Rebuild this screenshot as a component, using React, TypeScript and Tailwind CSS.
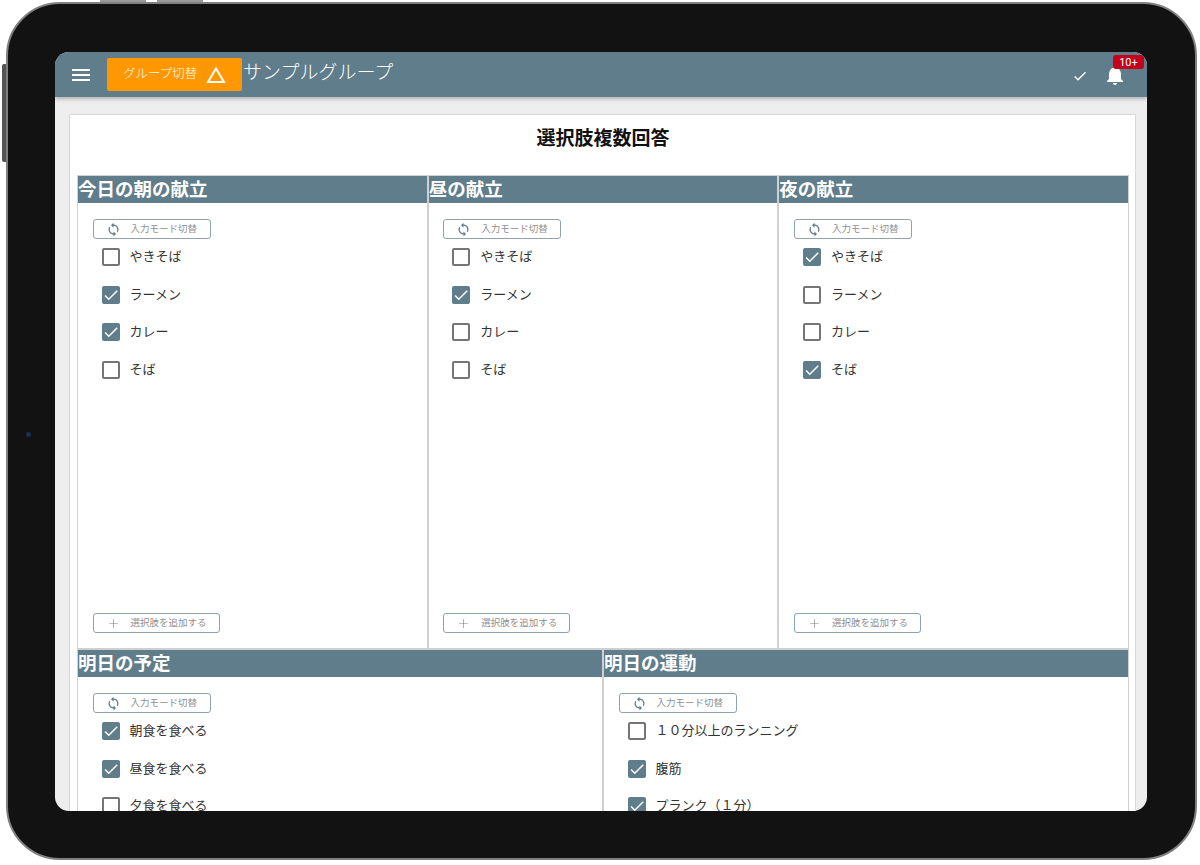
const FONT = "font-['Roboto','Noto_Sans_CJK_JP',sans-serif]";

type Choice = { label: string; checked?: boolean };
type Question = { title: string; choices: Choice[]; canAdd?: boolean };

const meals = (on: boolean[]): Choice[] =>
  ["やきそば", "ラーメン", "カレー", "そば"].map((label, i) => ({ label, checked: on[i] }));

const topRow: Question[] = [
  { title: "今日の朝の献立", choices: meals([false, true, true, false]), canAdd: true },
  { title: "昼の献立", choices: meals([false, true, false, false]), canAdd: true },
  { title: "夜の献立", choices: meals([true, false, false, true]), canAdd: true },
];

const bottomRow: Question[] = [
  {
    title: "明日の予定",
    choices: [
      { label: "朝食を食べる", checked: true },
      { label: "昼食を食べる", checked: true },
      { label: "夕食を食べる" },
    ],
  },
  {
    title: "明日の運動",
    choices: [
      { label: "１０分以上のランニング" },
      { label: "腹筋", checked: true },
      { label: "プランク（１分）", checked: true },
    ],
  },
];

function Checkbox({ checked }: { checked?: boolean }) {
  if (checked) {
    return (
      <span className="flex h-[18px] w-[18px] shrink-0 items-center justify-center rounded-[2px] bg-[#607d8b]">
        <svg viewBox="0 0 24 24" className="h-[18px] w-[18px] fill-white">
          <path d="M9 16.2 4.8 12l-1.4 1.4L9 19 21 7l-1.4-1.4L9 16.2z" />
        </svg>
      </span>
    );
  }
  return <span className="h-[18px] w-[18px] shrink-0 rounded-[2px] border-2 border-[#757575] bg-white" />;
}

function OutlineButton({ wide, label }: { wide?: boolean; label: string }) {
  return (
    <div
      className={`flex h-5 items-center rounded-[3px] border border-[#8fa3ad] bg-white pl-[12px] text-[9.5px] text-[#909090] ${
        wide ? "w-[127px]" : "w-[118px]"
      }`}
    >
      {wide ? (
        <svg viewBox="0 0 24 24" className="h-[15px] w-[15px] fill-[#808080]">
          <path d="M11.5 5h1v6.5H19v1h-6.5V19h-1v-6.5H5v-1h6.5z" />
        </svg>
      ) : (
        <svg viewBox="0 0 24 24" className="h-[15px] w-[15px] fill-[#607d8b]">
          <path d="M12 4V1L8 5l4 4V6c3.31 0 6 2.69 6 6 0 1.01-.25 1.97-.7 2.8l1.46 1.46C19.54 15.03 20 13.57 20 12c0-4.42-3.58-8-8-8zm0 14c-3.31 0-6-2.69-6-6 0-1.01.25-1.97.7-2.8L5.24 7.74C4.46 8.97 4 10.43 4 12c0 4.42 3.58 8 8 8v3l4-4-4-4v3z" />
        </svg>
      )}
      <span className="ml-[10px] whitespace-nowrap">{label}</span>
    </div>
  );
}

function QuestionColumn({ q }: { q: Question }) {
  return (
    <div className="flex min-w-0 flex-1 flex-col border-r-2 border-[#d0d0d0] last:border-r-0">
      <div className="flex h-[27px] shrink-0 items-center bg-[#607d8b] pt-[2px] text-[18.5px] leading-none font-bold text-white">
        {q.title}
      </div>
      <div className="flex flex-1 flex-col pt-[16px] pr-[15px] pb-[15px] pl-[14.6px]">
        <OutlineButton label="入力モード切替" />
        <ul className="mt-[9px] flex flex-col gap-[19.5px] pl-[9px]">
          {q.choices.map((c) => (
            <li key={c.label} className="flex h-[18px] items-center gap-[10px] text-[13px] text-[#333]">
              <Checkbox checked={c.checked} />
              <span className="whitespace-nowrap">{c.label}</span>
            </li>
          ))}
        </ul>
        {q.canAdd && (
          <div className="mt-auto">
            <OutlineButton wide label="選択肢を追加する" />
          </div>
        )}
      </div>
    </div>
  );
}

export default function App() {
  return (
    <div className={`h-[865px] w-[1200px] overflow-hidden bg-white pt-[2px] pl-[6px] ${FONT}`}>
      <div className="relative h-[858px] w-[1191px] rounded-[54px] border-2 border-[#808080] bg-[#121212] pt-[48px] pl-[47px]">
        {/* hardware buttons */}
        <div className="absolute -top-[4px] left-[92px] h-[2px] w-[46px] bg-[#999]" />
        <div className="absolute -top-[4px] left-[149px] h-[2px] w-[46px] bg-[#999]" />
        <div className="absolute top-[60px] -left-[6px] h-[98px] w-[4px] rounded-l-[2px] bg-[#555]" />
        <div className="absolute top-[428px] left-[18px] h-[5px] w-[5px] rounded-full bg-[#1a2f55]" />

        <div className="flex h-[759px] w-[1092px] flex-col overflow-hidden rounded-[14px] bg-[#eeeeee]">
          <header className="relative flex h-[45px] shrink-0 items-center bg-[#607d8b] shadow-[0_2px_4px_rgba(0,0,0,0.25)]">
            <svg viewBox="0 0 24 24" className="ml-[14px] h-6 w-6 fill-white">
              <path d="M3 18h18v-2H3v2zm0-5h18v-2H3v2zm0-7v2h18V6H3z" />
            </svg>
            <div className="ml-[14px] flex h-[33px] w-[135px] items-center rounded-[2px] bg-[#ff9800] pl-[16px] text-[12.5px] font-light text-white">
              <span className="whitespace-nowrap">グループ切替</span>
              <svg viewBox="0 0 20 18" className="ml-[9px] h-[18px] w-[20px] fill-none stroke-white stroke-2">
                <path d="M10 2.5 18 16H2z" />
              </svg>
            </div>
            <span className="mb-[2px] ml-[1px] text-[19px] font-light whitespace-nowrap text-white">サンプルグループ</span>
            <svg viewBox="0 0 24 24" className="mt-[2px] ml-auto h-4 w-4 fill-white">
              <path d="M9 16.2 4.8 12l-1.4 1.4L9 19 21 7l-1.4-1.4L9 16.2z" />
            </svg>
            <svg viewBox="0 0 24 24" className="mt-[1px] mr-[20px] ml-[15px] h-[24px] w-[24px] fill-white">
              <path d="M12 22c1.1 0 2-.9 2-2h-4c0 1.1.89 2 2 2zm6-6v-5c0-3.07-1.64-5.64-4.5-6.32V4c0-.83-.67-1.5-1.5-1.5s-1.5.67-1.5 1.5v.68C7.63 5.36 6 7.92 6 11v5l-2 2v1h16v-1l-2-2z" />
            </svg>
            <span className="absolute top-[3px] left-[1058px] flex h-[14px] w-[31px] items-center justify-center rounded-[3px] bg-[#c4001d] text-[11px] leading-none text-white">
              10+
            </span>
          </header>

          <main className="px-[14px] pt-[17px]">
            <div className="w-[1067px] border border-[#d8d8d8] bg-white pr-[6px] pb-[8px] pl-[7px]">
              <h1 className="flex h-[60px] items-center justify-center pb-[12px] text-[19px] font-bold text-[#111]">
                選択肢複数回答
              </h1>
              <div className="border-x border-[#d0d0d0]">
                <div className="flex h-[473px] border-t border-[#d0d0d0]">
                  {topRow.map((q) => (
                    <QuestionColumn key={q.title} q={q} />
                  ))}
                </div>
                <div className="flex h-[260px] border-t-2 border-[#d0d0d0]">
                  {bottomRow.map((q) => (
                    <QuestionColumn key={q.title} q={q} />
                  ))}
                </div>
              </div>
            </div>
          </main>
        </div>
      </div>
    </div>
  );
}
